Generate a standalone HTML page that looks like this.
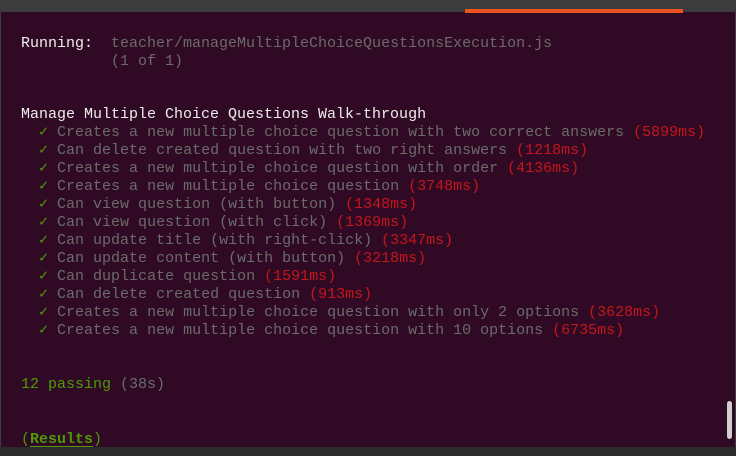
<!DOCTYPE html>
<html><head><style>
html,body{margin:0;padding:0;width:736px;height:456px;overflow:hidden;background:#300a24;}
.top{position:absolute;left:0;top:0;width:736px;height:12px;background:#3c3c3c;}
.tab{position:absolute;left:465px;top:9px;width:218px;height:4px;background:#e95420;}
.bot{position:absolute;left:0;top:447px;width:736px;height:9px;background:#2b2b2b;}
.lb{position:absolute;left:0;top:12px;width:1px;height:435px;background:#3c3c3c;}
.rb{position:absolute;left:735px;top:12px;width:1px;height:435px;background:#3c3c3c;}
.t{position:absolute;left:21px;font-family:"Liberation Mono","DejaVu Sans Mono",monospace;font-size:15px;line-height:18px;white-space:pre;color:#6b6b6b;}
.w{color:#eeeeec}.g{color:#4e9a06}.r{color:#c4161c}.d{color:#6b6b6b}
.sb{position:absolute;left:727px;top:401px;width:5px;height:38px;border-radius:3px;background:#cfcfcf;}
u{text-decoration-thickness:1px;text-underline-offset:3px}
</style></head><body>
<div class="top"></div><div class="tab"></div><div class="lb"></div><div class="rb"></div>
<div class="t" style="top:35px"><span class="w">Running:</span>  teacher/manageMultipleChoiceQuestionsExecution.js
          (1 of 1)</div>
<div class="t" style="top:106px"><span class="w">Manage Multiple Choice Questions Walk-through</span>
  <span class="g">✓</span> Creates a new multiple choice question with two correct answers <span class="r">(5899ms)</span>
  <span class="g">✓</span> Can delete created question with two right answers <span class="r">(1218ms)</span>
  <span class="g">✓</span> Creates a new multiple choice question with order <span class="r">(4136ms)</span>
  <span class="g">✓</span> Creates a new multiple choice question <span class="r">(3748ms)</span>
  <span class="g">✓</span> Can view question (with button) <span class="r">(1348ms)</span>
  <span class="g">✓</span> Can view question (with click) <span class="r">(1369ms)</span>
  <span class="g">✓</span> Can update title (with right-click) <span class="r">(3347ms)</span>
  <span class="g">✓</span> Can update content (with button) <span class="r">(3218ms)</span>
  <span class="g">✓</span> Can duplicate question <span class="r">(1591ms)</span>
  <span class="g">✓</span> Can delete created question <span class="r">(913ms)</span>
  <span class="g">✓</span> Creates a new multiple choice question with only 2 options <span class="r">(3628ms)</span>
  <span class="g">✓</span> Creates a new multiple choice question with 10 options <span class="r">(6735ms)</span></div>
<div class="t" style="top:376px"><span class="g">12 passing</span> (38s)</div>
<div class="t g" style="top:431px">(<u><b>Results</b></u>)</div>
<div class="sb"></div>
<div class="bot"></div>
</body></html>
